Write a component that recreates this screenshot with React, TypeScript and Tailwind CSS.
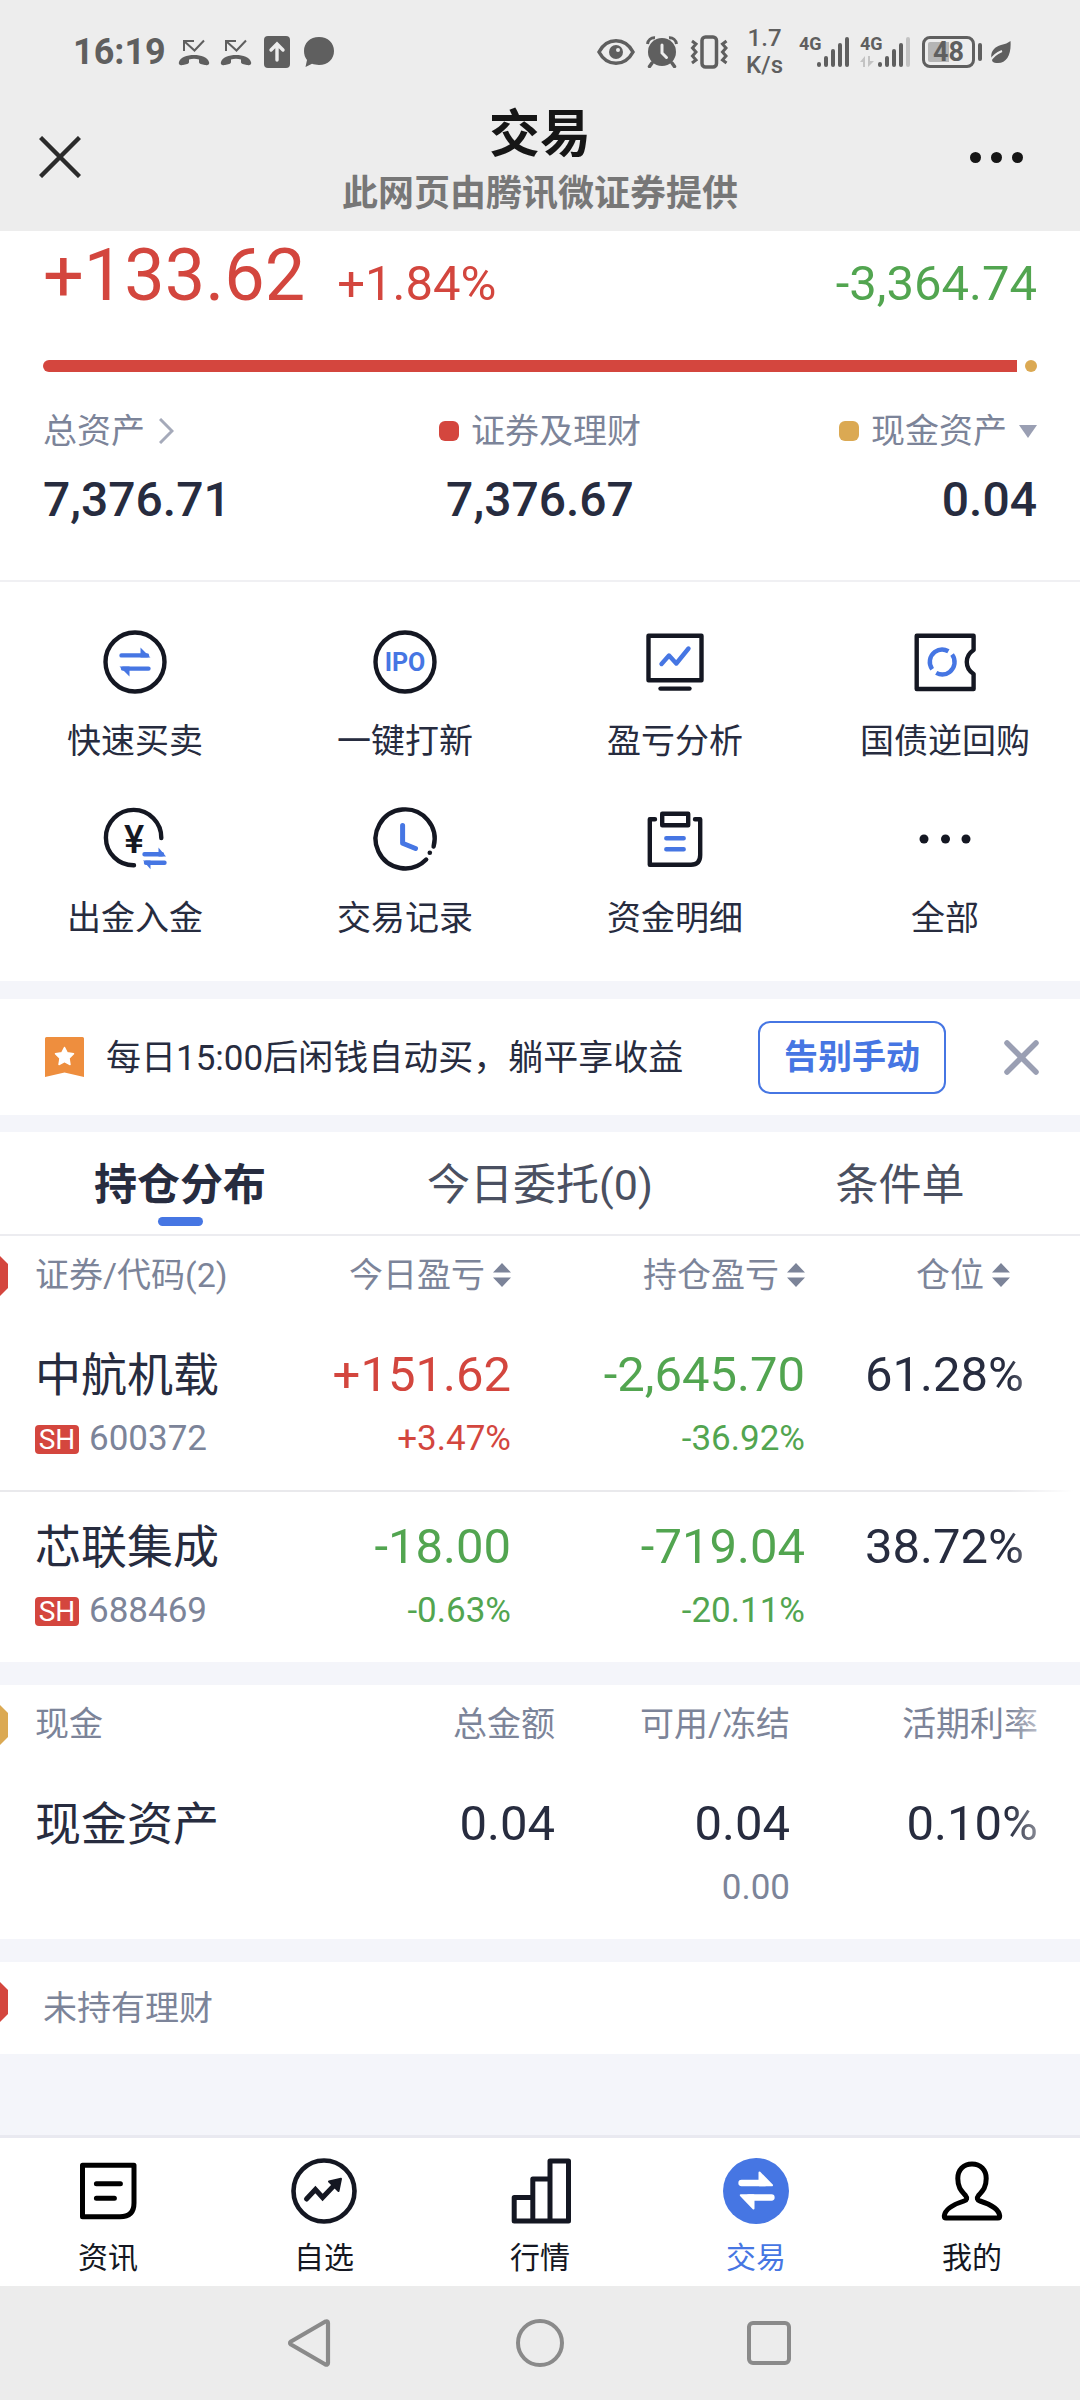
import React from 'react';

type Tone = 'up' | 'down' | 'plain';

const toneClass: Record<Tone, string> = {
  up: 'text-[#d3463e]',
  down: 'text-[#52a550]',
  plain: 'text-[#272c3f]',
};

interface IconProps {
  children: React.ReactNode;
  size?: string;
  box?: string;
}

const Icon: React.FC<IconProps> = ({ children, size = 'size-16', box = '0 0 64 64' }) => (
  <svg
    viewBox={box}
    className={`${size} shrink-0 overflow-visible`}
    fill="none"
    stroke="#141722"
    strokeWidth={4.4}
    strokeLinecap="round"
    strokeLinejoin="round"
    aria-hidden="true"
  >
    {children}
  </svg>
);

const BLUE = '#4676e3';

/* ---------- status bar ---------- */

const MissedCallIcon = () => (
  <svg viewBox="0 0 32 28" className="h-7 w-8" fill="none" aria-hidden="true">
    <path d="M6 13V3H16M6 3L16.500 12.500L26 2.500" stroke="#5f5f5f" strokeWidth="2" />
    <path
      d="M1 24C0 27 3 27.500 5 27C8 26.500 11 26 11 24V21.500C14 20.500 18 20.500 21 21.500V24C21 26 24 26.500 27 27C29 27.500 32 27 31 24C30 19.500 23 17 16 17S2 19.500 1 24Z"
      fill="#5f5f5f"
    />
  </svg>
);

const SignalBars = ({ weak }: { weak?: boolean }) => (
  <div className="flex h-8 w-[50px] items-start justify-between">
    <div className="flex flex-col">
      <span className="font-['Liberation_Sans_Narrow','Roboto',sans-serif] text-lg leading-4 font-bold">4G</span>
      {weak && (
        <svg viewBox="0 0 14 11" className="mt-1 h-[11px] w-[14px]" fill="#c3c3c3" aria-hidden="true">
          <path d="M0 6L5 0V11H3V6ZM8 0H10V5H14L8 11Z" />
        </svg>
      )}
    </div>
    <svg viewBox="17 0 32 32" className="-ml-2 size-8 shrink-0" strokeWidth="4" strokeLinecap="round" stroke="#5f5f5f" aria-hidden="true">
      <path d="M19 28V29" />
      <path d="M26 22V29" />
      <path d="M33 15V29" />
      <path d="M40 9V29" />
      <path d="M47 3V29" stroke={weak ? '#c3c3c3' : '#5f5f5f'} />
    </svg>
  </div>
);

const StatusBar = () => (
  <div className="flex h-[104px] items-center justify-between pl-[73px] pr-[69px] text-[#5f5f5f]">
    <div className="flex items-center">
      <span className="text-[36px] leading-10 font-bold">16:19</span>
      <div className="ml-3 flex items-center gap-[10px]">
        <MissedCallIcon />
        <MissedCallIcon />
      </div>
      <svg viewBox="0 0 26 32" className="ml-3 h-8 w-[26px]" fill="none" aria-hidden="true">
        <rect width="26" height="32" rx="4" fill="#5f5f5f" />
        <path d="M13 24V9M7 14L13 8L19 14" stroke="#ededed" strokeWidth="3.400" strokeLinecap="round" />
      </svg>
      <svg viewBox="0 0 30 30" className="ml-[14px] size-[30px]" aria-hidden="true">
        <path d="M15 0C24 0 30 6 30 14S24 28 15 28C12.500 28 10 27.500 8 26.800L1.500 30L3 23C1 20.500 0 17.500 0 14C0 6 6 0 15 0Z" fill="#5f5f5f" />
      </svg>
    </div>
    <div className="flex items-center">
      <svg viewBox="0 0 38 26" className="h-[26px] w-[38px]" fill="none" aria-hidden="true">
        <path d="M2 13C10 -2 28 -2 36 13C28 28 10 28 2 13Z" stroke="#5f5f5f" strokeWidth="3.500" />
        <circle cx="19" cy="13" r="7" fill="#5f5f5f" />
        <circle cx="21" cy="11" r="2" fill="#ededed" />
      </svg>
      <svg viewBox="0 0 32 32" className="ml-[11px] size-8" fill="none" aria-hidden="true">
        <circle cx="16" cy="16" r="14" fill="#5f5f5f" />
        <path d="M6 27L3.500 30.500M26 27L28.500 30.500" stroke="#5f5f5f" strokeWidth="3.500" strokeLinecap="round" />
        <path d="M1.500 8C2 4 5 1.500 9 1.800M30.500 8C30 4 27 1.500 23 1.800" stroke="#5f5f5f" strokeWidth="3" />
        <path d="M16 9V17L20.500 21.500" stroke="#ededed" strokeWidth="3" strokeLinecap="round" />
      </svg>
      <svg viewBox="0 0 38 34" className="ml-3 h-[34px] w-[38px]" fill="none" stroke="#5f5f5f" aria-hidden="true">
        <rect x="12" y="2" width="14.500" height="30" rx="3.500" strokeWidth="3.500" />
        <path d="M2 6L6 9L2.500 13L6 17L2.500 21L6 25L2 28M36.500 6L32.500 9L36 13L32.500 17L36 21L32.500 25L36.500 28" strokeWidth="3" />
      </svg>
      <span className="ml-[18px] flex flex-col items-center text-2xl leading-[27px] font-medium">
        <span>1.7</span>
        <span>K/s</span>
      </span>
      <div className="ml-4 flex gap-[11px]">
        <SignalBars />
        <SignalBars weak />
      </div>
      <div className="ml-3 flex items-center gap-[3px]">
        <div className="flex h-8 w-[53px] items-center justify-center rounded-lg border-[3px] border-[#5f5f5f] bg-linear-to-r from-[#b5b5b5] from-50% to-[#ededed] to-50% bg-clip-content p-[3px]">
          <span className="text-[27px] leading-8 font-bold">48</span>
        </div>
        <div className="h-[18px] w-1 rounded-sm bg-[#5f5f5f]" />
      </div>
      <svg viewBox="0 0 22 24" className="ml-[7px] h-6 w-[22px]" fill="none" aria-hidden="true">
        <path d="M21.500 1C22.500 14 18 23 9 23C6.500 23 4.500 22.500 3.500 21.500C0 14 4 7 12 5C16 4 19 3 21.500 1Z" fill="#5f5f5f" />
        <path d="M0.500 22C3 17 8 13 13 11" stroke="#ededed" strokeWidth="2" />
      </svg>
    </div>
  </div>
);

const Header = () => (
  <header className="bg-[#ededed] pb-[21px]">
    <StatusBar />
    <div className="flex h-[106px] items-center justify-between px-[39px]">
      <button type="button" aria-label="关闭" className="flex w-16 items-center">
        <svg viewBox="0 0 42 42" className="size-[42px]" stroke="#2b2b2b" strokeWidth="4.400" aria-hidden="true">
          <path d="M1.500 1.500L40.500 40.500M40.500 1.500L1.500 40.500" />
        </svg>
      </button>
      <div className="pt-2 text-center">
        <h1 className="text-[51px] leading-[66px] font-bold text-[#161616]">交易</h1>
        <p className="text-[36px] leading-[52px] font-bold text-[#777777]">此网页由腾讯微证券提供</p>
      </div>
      <button type="button" aria-label="更多" className="flex w-16 justify-end gap-[10px] pr-[18px]">
        <span className="size-[11px] shrink-0 rounded-full bg-[#161616]" />
        <span className="size-[11px] shrink-0 rounded-full bg-[#161616]" />
        <span className="size-[11px] shrink-0 rounded-full bg-[#161616]" />
      </button>
    </div>
  </header>
);

/* ---------- assets summary ---------- */

const Summary = () => (
  <section className="border-b-2 border-[#f0f0f3] px-[43px] pb-[54px]">
    <div className="flex items-baseline justify-between">
      <div className="flex items-baseline gap-8 text-[#d3463e]">
        <span className="text-[72px] leading-[90px]">+133.62</span>
        <span className="text-[49px]">+1.84%</span>
      </div>
      <span className="text-[49px] text-[#52a550]">-3,364.74</span>
    </div>
    <div className="mt-[39px] flex h-3 gap-2">
      <div className="grow rounded-l-full bg-[#d4463e]" />
      <div className="w-3 rounded-full bg-[#dba953]" />
    </div>
    <div className="mt-[37px] grid grid-cols-3">
      <div>
        <a href="#assets" className="flex items-center gap-[14px] text-[34px] leading-[44px] text-[#7c8499]">
          总资产
          <svg viewBox="0 0 15 26" className="h-[26px] w-[15px]" fill="none" stroke="#a5aaba" strokeWidth="3" aria-hidden="true">
            <path d="M1 1L13 13L1 25" />
          </svg>
        </a>
        <p className="mt-[21px] text-[48px] leading-[52px] font-medium text-[#272c3f]">7,376.71</p>
      </div>
      <div className="flex flex-col items-center">
        <p className="flex items-center gap-3 text-[34px] leading-[44px] text-[#7c8499]">
          <span className="size-5 rounded-md bg-[#d4463e]" />
          证券及理财
        </p>
        <p className="mt-[21px] text-[48px] leading-[52px] font-medium text-[#272c3f]">7,376.67</p>
      </div>
      <div className="flex flex-col items-end">
        <button type="button" className="flex items-center gap-3 text-[34px] leading-[44px] text-[#7c8499]">
          <span className="size-5 rounded-md bg-[#dba953]" />
          <span>现金资产</span>
          <svg viewBox="0 0 18 13" className="h-[13px] w-[18px]" fill="#9a9fb3" aria-hidden="true">
            <path d="M0 0H18L9 13Z" />
          </svg>
        </button>
        <p className="mt-[21px] text-[48px] leading-[52px] font-medium text-[#272c3f]">0.04</p>
      </div>
    </div>
  </section>
);

/* ---------- shortcuts ---------- */

const shortcuts: { label: string; icon: React.ReactNode }[] = [
  {
    label: '快速买卖',
    icon: (
      <Icon>
        <circle cx="32" cy="32" r="29.500" />
        <path d="M18.500 25.400H44M20 38.600H45.500" stroke={BLUE} />
        <path d="M37.500 17.500L47.500 27.600H37.500ZM16.500 36.400H26.500V46.500Z" fill={BLUE} stroke="none" />
      </Icon>
    ),
  },
  {
    label: '一键打新',
    icon: (
      <Icon>
        <circle cx="32" cy="32" r="29.500" />
        <text x="32" y="41" textAnchor="middle" fontSize="25" fontWeight="700" fill={BLUE} stroke="none">
          IPO
        </text>
      </Icon>
    ),
  },
  {
    label: '盈亏分析',
    icon: (
      <Icon>
        <rect x="5.500" y="5.700" width="53" height="44.500" />
        <path d="M17.500 58.600H46.500" />
        <path d="M18.500 34L26 25.500L33.300 33.500L45.500 18.500" stroke={BLUE} />
      </Icon>
    ),
  },
  {
    label: '国债逆回购',
    icon: (
      <Icon>
        <path d="M3.700 5.700H60.600V20C51.500 26 51.500 38 60.600 44V59H3.700Z" />
        <circle
          cx="29.200"
          cy="32"
          r="12.400"
          stroke={BLUE}
          strokeLinecap="butt"
          strokeDasharray="33.500 5.450"
          transform="rotate(-37 29.200 32)"
        />
      </Icon>
    ),
  },
  {
    label: '出金入金',
    icon: (
      <Icon>
        <path d="M58.300 31A27.700 27.700 0 1 0 31 58.300" />
        <text x="31" y="46" textAnchor="middle" fontSize="38" fontWeight="500" fill="#141722" stroke="none">
          ¥
        </text>
        <path d="M41.500 47.300H59M43 55.700H61.500" stroke={BLUE} />
        <path d="M55.500 40.500L63 49.500H55.500ZM40 53.500H47.500V62.300Z" fill={BLUE} stroke="none" />
      </Icon>
    ),
  },
  {
    label: '交易记录',
    icon: (
      <Icon>
        <path d="M60.600 39.500A29.500 29.500 0 1 0 53.200 52.500" />
        <circle cx="56.800" cy="45.700" r="2.300" fill="#141722" stroke="none" />
        <path d="M29.600 18.500V36.300L42.500 41.500" stroke={BLUE} strokeWidth="5" />
      </Icon>
    ),
  },
  {
    label: '资金明细',
    icon: (
      <Icon>
        <path d="M12 12.300H6.800V57.700H48Q57.200 57.700 57.200 48V12.300H52" />
        <rect x="19.200" y="6.700" width="26" height="11.500" />
        <path d="M23.300 31.300H40.700M23.300 42.300H40.700" stroke={BLUE} />
      </Icon>
    ),
  },
  {
    label: '全部',
    icon: (
      <Icon>
        <g fill="#141722" stroke="none">
          <circle cx="11" cy="32" r="4.500" />
          <circle cx="32.500" cy="32" r="4.500" />
          <circle cx="53" cy="32" r="4.500" />
        </g>
      </Icon>
    ),
  },
];

const Shortcuts = () => (
  <nav className="grid grid-cols-4 gap-y-[35px] pt-12 pb-[32px]">
    {shortcuts.map(({ label, icon }) => (
      <button key={label} type="button" className="flex flex-col items-center gap-4">
        {icon}
        <span className="text-[34px] leading-[62px] text-[#272c3f]">{label}</span>
      </button>
    ))}
  </nav>
);

/* ---------- notice ---------- */

const Notice = () => (
  <section className="flex h-[116px] items-center bg-white px-[41px]">
    <svg viewBox="0 0 40 40" className="mx-1 size-10" aria-hidden="true">
      <path d="M0 1.500Q0 0 1.500 0H37.500Q39 0 39 1.500V40L19.500 35.500L0 40Z" fill="#ee8e3e" />
      <path
        d="M19.500 10.500L22.200 15.800L28.500 16.800L24 21.300L25 27.500L19.500 24.700L14 27.500L15 21.300L10.500 16.800L16.800 15.800Z"
        fill="#fff"
        stroke="#fff"
        strokeWidth="1.500"
        strokeLinejoin="round"
      />
    </svg>
    <p className="ml-[17px] grow pt-1 text-[35px] leading-[44px] text-[#272c3f]">每日15:00后闲钱自动买，躺平享收益</p>
    <button type="button" className="h-[73px] rounded-xl border-2 border-[#4676e3] px-6 text-[34px] leading-[66px] font-bold text-[#4676e3]">
      告别手动
    </button>
    <button type="button" aria-label="关闭提示" className="ml-[58px]">
      <svg viewBox="0 0 35 35" className="size-[35px]" stroke="#9a9fb3" strokeWidth="5.500" strokeLinecap="round" aria-hidden="true">
        <path d="M3 3L32 32M32 3L3 32" />
      </svg>
    </button>
  </section>
);

/* ---------- holdings ---------- */

const Tabs = () => (
  <div role="tablist" className="grid h-[104px] grid-cols-3 border-b-2 border-[#ececf0] text-[43px] leading-[52px] text-[#4a5061]">
    <button type="button" role="tab" aria-selected="true" className="flex flex-col items-center pt-[27px] font-bold text-[#272c3f]">
      持仓分布
      <span className="mt-[6px] h-[9px] w-[45px] rounded-full bg-[#4676e3]" />
    </button>
    <button type="button" role="tab" aria-selected="false" className="flex justify-center pt-[27px]">
      今日委托(0)
    </button>
    <button type="button" role="tab" aria-selected="false" className="flex justify-center pt-[27px]">
      条件单
    </button>
  </div>
);

const SideMark = ({ color }: { color: string }) => (
  <svg viewBox="0 0 8 40" className="absolute top-5 left-0 h-10 w-2" fill={color} aria-hidden="true">
    <path d="M0 0L8 8V32L0 40Z" />
  </svg>
);

const EdgeFade = () => (
  <div className="pointer-events-none absolute inset-y-0 right-0 w-[72px] bg-linear-to-r from-white/0 to-white to-90%" />
);

const SortLabel = ({ children }: { children: React.ReactNode }) => (
  <button type="button" className="inline-flex items-center gap-2">
    {children}
    <svg viewBox="0 0 18 24" className="h-6 w-[18px]" fill="#7c8499" aria-hidden="true">
      <path d="M9 0L18 9.500H0ZM0 14.500H18L9 24Z" />
    </svg>
  </button>
);

interface ValueCellProps {
  value: string;
  sub?: string;
  tone?: Tone;
  subTone?: string;
  className?: string;
}

const ValueCell: React.FC<ValueCellProps> = ({ value, sub, tone = 'plain', subTone, className = '' }) => (
  <td className={`pt-[28px] pb-[31px] text-right align-top ${toneClass[tone]} ${className}`}>
    <div className="text-[49px] leading-[54px]">{value}</div>
    {sub && <div className={`mt-[17px] text-[35px] leading-10 ${subTone ?? ''}`}>{sub}</div>}
  </td>
);

const holdings: { name: string; code: string; day: string; dayPct: string; dayTone: Tone; total: string; totalPct: string; ratio: string }[] = [
  { name: '中航机载', code: '600372', day: '+151.62', dayPct: '+3.47%', dayTone: 'up', total: '-2,645.70', totalPct: '-36.92%', ratio: '61.28%' },
  { name: '芯联集成', code: '688469', day: '-18.00', dayPct: '-0.63%', dayTone: 'down', total: '-719.04', totalPct: '-20.11%', ratio: '38.72%' },
];

const thClass = 'pt-[18px] pb-[24px] font-normal';

const Holdings = () => (
  <section className="bg-white">
    <Tabs />
    <div className="relative">
      <SideMark color="#d4463e" />
      <table className="w-full table-fixed">
        <thead className="text-[34px] leading-[42px] text-[#7c8499]">
          <tr>
            <th className={`${thClass} pl-[35px] text-left whitespace-nowrap`}>证券/代码(2)</th>
            <th className={`${thClass} w-[236px] text-right`}>
              <SortLabel>今日盈亏</SortLabel>
            </th>
            <th className={`${thClass} w-[294px] text-right`}>
              <SortLabel>持仓盈亏</SortLabel>
            </th>
            <th className={`${thClass} w-[275px] pr-[70px] text-right`}>
              <SortLabel>仓位</SortLabel>
            </th>
          </tr>
        </thead>
        <tbody>
          {holdings.map((h) => (
            <tr key={h.code} className="border-b-2 border-[#e9e9ec] last:border-b-0">
              <td className="pt-[28px] pb-[31px] pl-[35px] align-top">
                <div className="text-[46px] leading-[54px] text-[#272c3f]">{h.name}</div>
                <div className="mt-[17px] flex items-center gap-[10px] text-[35px] leading-10 text-[#7c8499]">
                  <span className="w-11 rounded-sm bg-[#d4463e] text-center text-[28px] leading-[29px] text-white">SH</span>
                  {h.code}
                </div>
              </td>
              <ValueCell value={h.day} sub={h.dayPct} tone={h.dayTone} />
              <ValueCell value={h.total} sub={h.totalPct} tone="down" />
              <ValueCell value={h.ratio} className="pr-[56px]" />
            </tr>
          ))}
        </tbody>
      </table>
      <EdgeFade />
    </div>
  </section>
);

const Cash = () => (
  <section className="relative bg-white">
    <SideMark color="#dba953" />
    <table className="w-full table-fixed">
      <thead className="text-[34px] leading-[42px] text-[#7c8499]">
        <tr>
          <th className={`${thClass} pl-[35px] text-left`}>现金</th>
          <th className={`${thClass} w-[235px] text-right`}>总金额</th>
          <th className={`${thClass} w-[235px] text-right`}>可用/冻结</th>
          <th className={`${thClass} w-[290px] pr-[42px] text-right`}>活期利率</th>
        </tr>
      </thead>
      <tbody>
        <tr>
          <td className="pt-[28px] pl-[35px] align-top text-[46px] leading-[54px] text-[#272c3f]">现金资产</td>
          <ValueCell value="0.04" />
          <ValueCell value="0.04" sub="0.00" subTone="text-[#7c8499]" />
          <ValueCell value="0.10%" className="pr-[42px]" />
        </tr>
      </tbody>
    </table>
    <EdgeFade />
  </section>
);

/* ---------- bottom navigation ---------- */

const navItems: { label: string; active?: boolean; icon: React.ReactNode }[] = [
  {
    label: '资讯',
    icon: (
      <g stroke="#000">
        <path d="M7.500 7.200H59V45Q59 58.800 45 58.800H7.500Z" />
        <path d="M21.400 25.700H45.400M21.400 40.300H39.400" />
      </g>
    ),
  },
  {
    label: '自选',
    icon: (
      <>
        <circle cx="33" cy="33" r="30.500" strokeWidth="4.600" />
        <path d="M15.500 41L24.400 31.500L31.600 39.500L43.500 27" strokeLinejoin="miter" />
        <path d="M50 20.800L38 23.500L47.500 33Z" fill="#141722" strokeWidth="2" />
      </>
    ),
  },
  {
    label: '行情',
    icon: <path d="M25.800 39.500H7.200V63H61.500V3H43V63M25.800 63V21H43" />,
  },
  {
    label: '交易',
    active: true,
    icon: (
      <>
        <circle cx="33" cy="33" r="33" fill={BLUE} stroke="none" />
        <path d="M18.500 25H42M26 39.500H48.500" stroke="#fff" strokeWidth="6.300" />
        <path d="M36.500 14.500L49 27.200H36.500ZM17.800 37.300H30.500V50.500Z" fill="#fff" stroke="#fff" strokeWidth="2" />
      </>
    ),
  },
  {
    label: '我的',
    icon: (
      <path
        stroke="#000"
        d="M33 6C24.500 6 18.800 12 18.800 20.500C18.800 29 21.500 32 26.500 37.500C28.500 40 28 42 25 43C14 46.500 6 51 5.300 58Q5.300 60 7 60H59Q60.700 60 60.700 58C60 51 52 46.500 41 43C38 42 37.500 40 39.500 37.500C44.500 32 47.200 29 47.200 20.500C47.200 12 41.500 6 33 6Z"
      />
    ),
  },
];

const BottomNav = () => (
  <nav className="grid grid-cols-5 border-t-[3px] border-[#e9e9f0] bg-white pt-5 pb-[7px]">
    {navItems.map(({ label, active, icon }) => (
      <a key={label} href={`#${label}`} className="flex flex-col items-center gap-[13px]">
        <Icon size="size-[66px]" box="0 0 66 66">
          <g strokeWidth="5">{icon}</g>
        </Icon>
        <span className={`text-[30px] leading-[42px] ${active ? 'text-[#4676e3]' : 'text-[#141722]'}`}>{label}</span>
      </a>
    ))}
  </nav>
);

const SystemBar = () => (
  <div className="flex h-[114px] items-center justify-center gap-[181px] bg-[#ececec]">
    <button type="button" aria-label="返回">
      <svg viewBox="0 0 48 48" className="size-12" fill="none" stroke="#8a8a8a" strokeWidth="4.200" strokeLinejoin="round" aria-hidden="true">
        <path d="M4 22.500L38 2.800Q41 1.500 41 4V44Q41 46.500 38 45.200L4 25.500Q2 24 4 22.500Z" />
      </svg>
    </button>
    <button type="button" aria-label="主屏幕">
      <span className="block size-12 rounded-full border-4 border-[#8a8a8a]" />
    </button>
    <button type="button" aria-label="最近任务" className="px-[2px]">
      <span className="block size-11 rounded-md border-4 border-[#8a8a8a]" />
    </button>
  </div>
);

export default function App() {
  return (
    <div className="flex min-h-screen flex-col bg-[#f4f5fa] font-['Roboto','Noto_Sans_CJK_SC',sans-serif]" lang="zh-CN">
      <Header />
      <main className="flex grow flex-col">
        <div className="bg-white">
          <Summary />
          <Shortcuts />
        </div>
        <div className="mt-[18px]">
          <Notice />
        </div>
        <div className="mt-[17px]">
          <Holdings />
        </div>
        <div className="mt-[23px]">
          <Cash />
        </div>
        <section className="relative mt-[23px] flex h-[92px] items-center bg-white pl-[43px]">
          <SideMark color="#d4463e" />
          <p className="text-[34px] leading-[42px] text-[#7c8499]">未持有理财</p>
        </section>
      </main>
      <BottomNav />
      <SystemBar />
    </div>
  );
}
